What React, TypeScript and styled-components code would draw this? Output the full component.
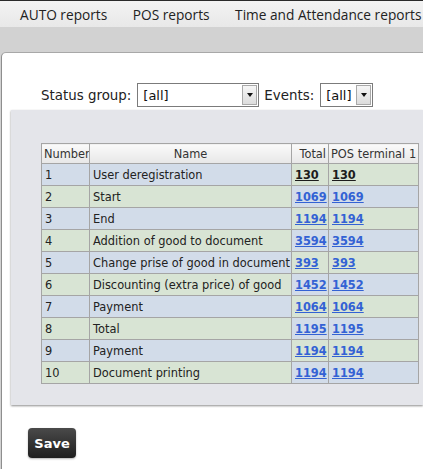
import React, { FC } from "react";
import styled, { createGlobalStyle } from "styled-components";

const GlobalStyle = createGlobalStyle`
    html, body {
        margin: 0;
        padding: 0;
        background: #d2d2d2;
        overflow: hidden;
    }
    body {
        width: 423px;
        height: 469px;
    }
`;

const NavBar = styled.div`
    height: 26px;
    border-top: 1px solid #2a2a2a;
    background: linear-gradient(#f3f3f3, #e8e8e8);
    display: flex;
    align-items: center;
    gap: 25.5px;
    padding-left: 20px;
    white-space: nowrap;
    overflow: hidden;
`;

const NavItem = styled.span`
    font-family: "Open Sans", "Noto Sans", sans-serif;
    font-size: 13.7px;
    color: #222;
`;

const Spacer = styled.div`
    height: 25px;
    background: #d2d2d2;
`;

const Panel = styled.div`
    margin-left: 1px;
    height: 420px;
    background: #fff;
    border-left: 1px solid #8e8e8e;
    border-top: 1px solid #a8a8a8;
    border-top-left-radius: 5px;
    padding-top: 30px;
    box-sizing: border-box;
`;

const FilterRow = styled.div`
    display: flex;
    align-items: center;
    padding-left: 39px;
    height: 24px;
    font-family: "DejaVu Sans", Verdana, sans-serif;
    font-size: 13.4px;
    color: #222;
`;

const Label = styled.span`
    margin-right: 6px;
`;

const SelectBox = styled.div<{ width: number }>`
    width: ${p => p.width}px;
    height: 24px;
    box-sizing: border-box;
    border: 1px solid #7b7b7b;
    background: #fff;
    display: flex;
    align-items: stretch;
    margin-right: 5px;
`;

const SelectText = styled.span`
    flex: 1;
    padding-left: 5px;
    display: flex;
    align-items: center;
    font-family: "DejaVu Sans", Verdana, sans-serif;
    font-size: 13px;
    color: #111;
`;

const ArrowBtn = styled.span`
    width: 15px;
    margin: 1px;
    box-sizing: border-box;
    border: 1px solid #a9a9a9;
    background: linear-gradient(#f6f6f6, #dcdcdc);
    display: flex;
    align-items: center;
    justify-content: center;
    &::after {
        content: "";
        border-left: 3.5px solid transparent;
        border-right: 3.5px solid transparent;
        border-top: 4px solid #111;
    }
`;

const GrayBox = styled.div`
    margin-top: 3px;
    margin-left: 9px;
    height: 295px;
    box-sizing: border-box;
    background: #e4e5ea;
    box-shadow: 0 1px 2px rgba(0, 0, 0, 0.45);
    padding: 33px 0 0 30px;
`;

const Table = styled.table`
    border-collapse: collapse;
    table-layout: fixed;
    width: 377px;
    font-family: "DejaVu Sans", Verdana, sans-serif;
    font-size: 11.4px;
    color: #222;
`;

const Th = styled.th<{ align?: string }>`
    height: 20px;
    padding: 0 2px;
    box-sizing: border-box;
    border: 1px solid #a5a5a5;
    background: linear-gradient(#fafafa, #e7e7e7);
    font-weight: normal;
    color: #333;
    text-align: ${p => p.align || "left"};
    white-space: nowrap;
    overflow: hidden;
`;

const Td = styled.td<{ tone: "blue" | "green" }>`
    height: 22px;
    padding: 0 3px;
    box-sizing: border-box;
    border: 1px solid #a5a5a5;
    background: ${p => (p.tone === "blue" ? "#d2dce9" : "#d8e4d4")};
    white-space: nowrap;
    overflow: hidden;
`;

const CountLink = styled.a<{ dark?: boolean }>`
    font-weight: bold;
    text-decoration: underline;
    color: ${p => (p.dark ? "#1c1c1c" : "#3362d4")};
    cursor: pointer;
`;

const SaveButton = styled.button`
    margin: 23px 0 0 26px;
    width: 48px;
    height: 30px;
    border: none;
    border-radius: 4px;
    background: linear-gradient(#4a4a4a, #1e1e1e);
    box-shadow: 0 1px 2px rgba(0, 0, 0, 0.3);
    color: #fff;
    font-family: "DejaVu Sans", Verdana, sans-serif;
    font-weight: bold;
    font-size: 13px;
    padding: 0;
    cursor: pointer;
`;

type Row = { name: string; total: number; pos: number };

const rows: Row[] = [
    { name: "User deregistration", total: 130, pos: 130 },
    { name: "Start", total: 1069, pos: 1069 },
    { name: "End", total: 1194, pos: 1194 },
    { name: "Addition of good to document", total: 3594, pos: 3594 },
    { name: "Change prise of good in document", total: 393, pos: 393 },
    { name: "Discounting (extra price) of good", total: 1452, pos: 1452 },
    { name: "Payment", total: 1064, pos: 1064 },
    { name: "Total", total: 1195, pos: 1195 },
    { name: "Payment", total: 1194, pos: 1194 },
    { name: "Document printing", total: 1194, pos: 1194 },
];

const Select: FC<{ width: number; value: string }> = ({ width, value }) => (
    <SelectBox width={width}>
        <SelectText>{value}</SelectText>
        <ArrowBtn />
    </SelectBox>
);

const App: FC = () => {
    return (
        <>
            <GlobalStyle />
            <NavBar>
                <NavItem>AUTO reports</NavItem>
                <NavItem>POS reports</NavItem>
                <NavItem>Time and Attendance reports</NavItem>
            </NavBar>
            <Spacer />
            <Panel>
                <FilterRow>
                    <Label>Status group:</Label>
                    <Select width={122} value="[all]" />
                    <Label>Events:</Label>
                    <Select width={53} value="[all]" />
                </FilterRow>
                <GrayBox>
                    <Table>
                        <colgroup>
                            <col style={{ width: 48 }} />
                            <col style={{ width: 202 }} />
                            <col style={{ width: 37 }} />
                            <col style={{ width: 90 }} />
                        </colgroup>
                        <thead>
                            <tr>
                                <Th>Number</Th>
                                <Th align="center">Name</Th>
                                <Th align="right">Total</Th>
                                <Th>POS terminal 1</Th>
                            </tr>
                        </thead>
                        <tbody>
                            {rows.map((r, i) => {
                                const odd = i % 2 === 0;
                                const left = odd ? "blue" : "green";
                                const right = odd ? "green" : "blue";
                                return (
                                    <tr key={i}>
                                        <Td tone={left}>{i + 1}</Td>
                                        <Td tone={left}>{r.name}</Td>
                                        <Td tone={right}><CountLink dark={i === 0}>{r.total}</CountLink></Td>
                                        <Td tone={right}><CountLink dark={i === 0}>{r.pos}</CountLink></Td>
                                    </tr>
                                );
                            })}
                        </tbody>
                    </Table>
                </GrayBox>
                <SaveButton>Save</SaveButton>
            </Panel>
        </>
    );
};

export default App;
